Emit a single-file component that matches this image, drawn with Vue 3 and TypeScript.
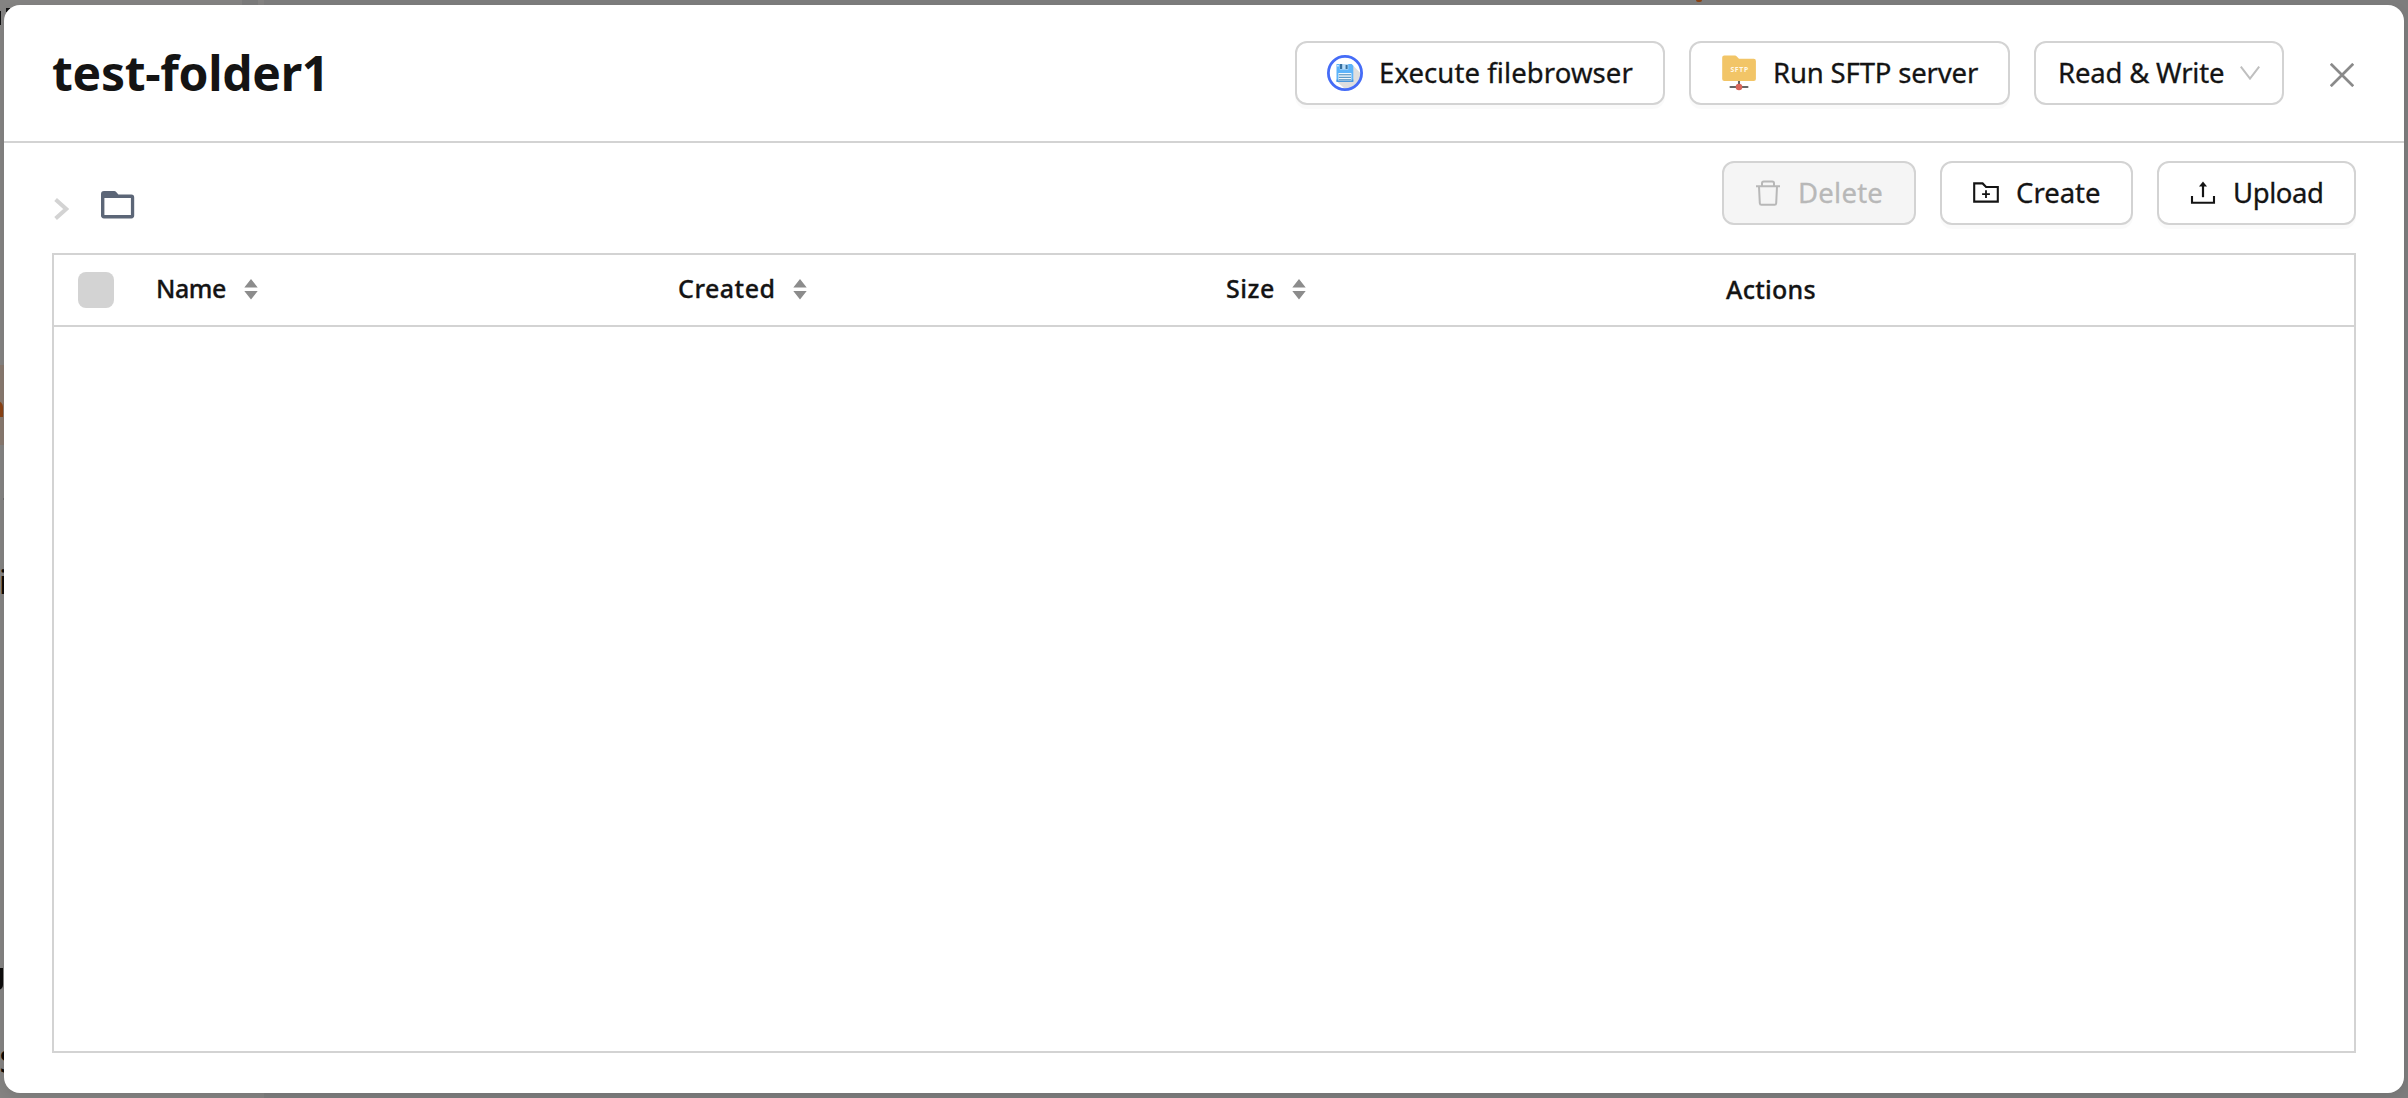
<script setup lang="ts">
interface Column {
  title: string
  key: string
  sortable: boolean
}

const columns: Column[] = [
  { title: 'Name', key: 'name', sortable: true },
  { title: 'Created', key: 'created', sortable: true },
  { title: 'Size', key: 'size', sortable: true },
  { title: 'Actions', key: 'actions', sortable: false },
]
</script>

<template>
  <div class="page">
    <div class="backdrop" aria-hidden="true">
      <div class="sidebar"></div>
      <div class="sidebar-handle"></div>
      <div class="active-item"></div>
      <span class="peek orange"></span>
      <span class="peek top-orange"></span>
      <span class="peek n-stem"></span>
      <span class="peek n-dot"></span>
      <span class="peek tick"></span>
      <span class="peek u-stem"></span>
      <span class="peek-text i-text">i</span>
      <span class="peek-text s-text">s</span>
    </div>

    <section class="modal">
      <header class="modal-header">
        <h1 class="title">test-folder1</h1>
        <div class="header-actions">
          <button class="btn execute">
            <svg width="36" height="36" viewBox="0 0 36 36">
              <circle cx="18" cy="18" r="16.7" fill="#fff" />
              <path d="M26 10.5L34 18.5A16 16 0 0 1 18 34L10.5 27Z" fill="#dedede" />
              <circle cx="18" cy="18" r="16.6" fill="none" stroke="#456cf7" stroke-width="2.8" />
              <path d="M9.5 9H24.7L26.3 10.7V26.5H9.5Z" fill="#5cb3fa" />
              <path d="M9.5 24.6H26.3V27H9.5Z" fill="#4a97dc" />
              <rect x="12.8" y="9" width="8.5" height="5.6" fill="#b9dcf8" />
              <rect x="13" y="9" width="2.2" height="5" fill="#356f9f" />
              <rect x="18.6" y="10" width="2" height="4" fill="#356f9f" />
              <rect x="10.3" y="10" width="1.3" height="1.5" fill="#fff" />
              <rect x="11.4" y="18" width="13" height="7.6" fill="#f1f8fc" />
              <path d="M11.8 19.8H24M11.8 22.3H24M11.8 24.8H24" stroke="#3d84b9" stroke-width="1" />
            </svg>
            <span class="label">Execute filebrowser</span>
          </button>
          <button class="btn sftp">
            <svg width="36" height="36" viewBox="0 0 36 36">
              <path d="M18 25V32M9.5 32H26.5" stroke="#666" stroke-width="2.1" stroke-linecap="round" />
              <path d="M3.3 .5H14Q15 .5 15.8 1.4L18 3.8H32.8Q34.9 3.8 34.9 5.9V23.9Q34.9 26 32.8 26H3.3Q1.2 26 1.2 23.9V2.6Q1.2 .5 3.3 .5Z" fill="#f2c567" />
              <circle cx="18" cy="32" r="3.3" fill="#d8655a" />
              <text x="9.4" y="17.2" textLength="17.6" font-family="Noto Sans, sans-serif" font-size="6.8" font-weight="700" fill="#fff8e8">SFTP</text>
            </svg>
            <span class="label">Run SFTP server</span>
          </button>
          <div class="select">
            <span class="label">Read &amp; Write</span>
            <svg width="20" height="14" viewBox="0 0 20 14">
              <path d="M.8 .6L10 12.6L19.2 .6" fill="none" stroke="#bfbfbf" stroke-width="2" />
            </svg>
          </div>
          <button class="close" aria-label="Close">
            <svg width="24" height="24" viewBox="0 0 24 24">
              <path d="M.8 .8L23.2 23.2M23.2 .8L.8 23.2" fill="none" stroke="#8a8a8a" stroke-width="2.7" />
            </svg>
          </button>
        </div>
      </header>

      <div class="toolbar">
        <nav class="breadcrumb">
          <svg class="crumb-arrow" width="15" height="22" viewBox="0 0 15 22">
            <path d="M1.6 1.5L12.2 11L1.6 20.5" fill="none" stroke="#d3d3d3" stroke-width="4" />
          </svg>
          <svg class="crumb-folder" width="34" height="28" viewBox="0 0 34 28">
            <path d="M3 0H13.2Q14.4 0 15.2 .9L17.4 3.4H30.4Q33.2 3.4 33.2 6.4V24.6Q33.2 27.4 30.4 27.4H3Q0 27.4 0 24.6V3Q0 0 3 0ZM3.4 7V24H29.9V7Z" fill="#5c6677" fill-rule="evenodd" />
          </svg>
        </nav>
        <div class="toolbar-actions">
          <button class="btn delete" disabled>
            <svg width="28" height="28" viewBox="0 0 28 28">
              <path d="M2 7.2H26M8 6.5V4.4Q8 2.6 9.8 2.6H18.2Q20 2.6 20 4.4V6.5M5 7.5L5.8 24.2Q5.9 25.8 7.5 25.8H20.5Q22.1 25.8 22.2 24.2L23 7.5" fill="none" stroke="#b8b8b8" stroke-width="2" />
            </svg>
            <span class="label">Delete</span>
          </button>
          <button class="btn create">
            <svg width="28" height="28" viewBox="0 0 28 28">
              <path d="M2.2 4.4H10.6L14.1 8H25.8V22.6H2.2Z" fill="none" stroke="#141414" stroke-width="2.1" />
              <path d="M14 11.2V19M10.1 15.1H17.9" stroke="#141414" stroke-width="1.8" />
            </svg>
            <span class="label">Create</span>
          </button>
          <button class="btn upload">
            <svg width="28" height="28" viewBox="0 0 28 28">
              <path d="M3 17V23.7H25V17" fill="none" stroke="#141414" stroke-width="2.1" />
              <path d="M14 5V18.2" stroke="#141414" stroke-width="2.2" />
              <path d="M14 2.4L18 7.6H10Z" fill="#141414" />
            </svg>
            <span class="label">Upload</span>
          </button>
        </div>
      </div>

      <div class="table">
        <div class="table-head">
          <div class="select-cell"><span class="checkbox"></span></div>
          <div v-for="col in columns" :key="col.key" class="cell" :class="col.key">
            <span class="label">{{ col.title }}</span>
            <svg v-if="col.sortable" class="sorter" width="14" height="21" viewBox="0 0 14 21">
              <path d="M7 0L13.7 8.5H.3ZM7 20.6L.3 12.1H13.7Z" fill="#8c8c8c" />
            </svg>
          </div>
        </div>
        <div class="table-body"></div>
      </div>
    </section>
  </div>
</template>

<style>
body {
  margin: 0;
  overflow: hidden;
}
</style>

<style scoped>
.page {
  position: relative;
  box-sizing: border-box;
  width: 2408px;
  height: 1098px;
  padding: 5px 4px;
  overflow: hidden;
  background: #7d7d7d;
  color: #141414;
  font-family: 'Noto Sans', 'Open Sans', sans-serif;
}
.backdrop > * {
  position: absolute;
}
.sidebar {
  left: 0;
  top: 0;
  width: 264px;
  height: 1098px;
  background: #848382;
}
.sidebar-handle {
  left: 242px;
  top: 0;
  width: 16px;
  height: 5px;
  background: #7b7b7b;
}
.active-item {
  left: 0;
  top: 365px;
  width: 20px;
  height: 80px;
  background: #88796f;
}
.orange {
  left: -5px;
  top: 401px;
  width: 8px;
  height: 16px;
  border-top-right-radius: 6px;
  background: #8a4214;
}
.top-orange {
  left: 1696px;
  top: 0;
  width: 6px;
  height: 2px;
  border-radius: 0 0 3px 3px;
  background: #8a4214;
}
.n-stem {
  left: 0;
  top: 11px;
  width: 1px;
  height: 14px;
  background: #101010;
}
.n-dot {
  left: 6px;
  top: 8px;
  width: 4px;
  height: 4px;
  background: #151515;
}
.tick {
  left: 3px;
  top: 498px;
  width: 1px;
  height: 2px;
  background: #6b6b6b;
}
.u-stem {
  left: -6px;
  top: 968px;
  width: 9px;
  height: 22px;
  border-bottom-right-radius: 5px;
  background: #0e0d0c;
}
.peek-text {
  color: #0b0a09;
  font-size: 32px;
  line-height: 32px;
}
.i-text {
  left: -1px;
  top: 566px;
}
.s-text {
  left: -1px;
  top: 1036px;
  font-size: 42px;
  line-height: 42px;
}

.modal {
  position: relative;
  box-sizing: border-box;
  display: flex;
  flex-direction: column;
  width: 2400px;
  height: 1088px;
  border-radius: 16px;
  background: #fff;
  box-shadow: 0 4px 12px rgba(0, 0, 0, 0.08);
}
.modal-header {
  box-sizing: border-box;
  flex: none;
  display: flex;
  justify-content: space-between;
  align-items: flex-start;
  height: 138px;
  padding: 36px 50px 0 48px;
  border-bottom: 2px solid #d3d3d3;
}
.title {
  margin: 0;
  height: 64px;
  font-size: 48px;
  font-weight: 700;
  line-height: 64px;
  letter-spacing: -0.3px;
}
.header-actions {
  display: flex;
  align-items: center;
}
.btn,
.select {
  box-sizing: border-box;
  display: flex;
  align-items: center;
  height: 64px;
  margin: 0;
  border: 2px solid #d3d3d3;
  border-radius: 12px;
  background: #fff;
  color: #141414;
  font-family: inherit;
  font-size: 27.5px;
  line-height: 40px;
  white-space: nowrap;
}
.btn {
  gap: 16px;
  padding: 0 0 0 30px;
  box-shadow: 0 4px 0 rgba(0, 0, 0, 0.02);
}
.btn svg,
.select svg,
.close svg {
  flex: none;
  display: block;
}
.label {
  -webkit-text-stroke: 0.3px currentColor;
}
.execute {
  width: 370px;
  margin-right: 24px;
  letter-spacing: 0.09px;
}
.sftp {
  width: 321px;
  margin-right: 24px;
  gap: 16px;
  letter-spacing: -0.16px;
}
.select {
  width: 250px;
  margin-right: 46px;
  padding-left: 22px;
  letter-spacing: -0.19px;
}
.select svg {
  margin-left: 16px;
}
.close {
  width: 24px;
  height: 24px;
  margin: 4px 0 0;
  padding: 0;
  border: 0;
  background: none;
}

.toolbar {
  flex: none;
  display: flex;
  justify-content: space-between;
  align-items: flex-start;
  height: 110px;
  padding: 18px 48px 0 50px;
  box-sizing: border-box;
}
.breadcrumb {
  display: flex;
  align-items: flex-start;
  padding-top: 30px;
}
.crumb-arrow {
  margin-top: 7px;
}
.crumb-folder {
  margin-left: 32px;
}
.toolbar-actions {
  display: flex;
  gap: 24px;
}
.delete {
  width: 194px;
  background: #f5f5f5;
  color: #b8b8b8;
  letter-spacing: 0.25px;
  box-shadow: none;
}
.create {
  width: 193px;
}
.upload {
  width: 199px;
  letter-spacing: -0.43px;
}

.table {
  box-sizing: border-box;
  flex: none;
  display: flex;
  flex-direction: column;
  width: 2304px;
  height: 800px;
  margin-left: 48px;
  border: 2px solid #d3d3d3;
}
.table-head {
  flex: none;
  display: flex;
  height: 70px;
  border-bottom: 2px solid #d3d3d3;
  font-size: 25px;
  font-weight: 500;
  line-height: 36px;
}
.table-body {
  flex: 1;
}
.select-cell {
  box-sizing: border-box;
  display: flex;
  align-items: center;
  width: 102px;
  padding-left: 24px;
}
.checkbox {
  width: 36px;
  height: 36px;
  border-radius: 8px;
  background: #d3d3d3;
}
.cell {
  display: flex;
  align-items: center;
}
.cell .label {
  padding-bottom: 4px;
}
.sorter {
  margin-top: -2px;
}
.name {
  width: 522px;
  letter-spacing: -0.46px;
}
.name .sorter {
  margin-left: 18px;
}
.created {
  width: 548px;
  letter-spacing: 0.5px;
}
.created .sorter {
  margin-left: 17px;
}
.size {
  width: 500px;
  letter-spacing: 0.52px;
}
.size .sorter {
  margin-left: 17px;
}
.actions {
  letter-spacing: 0.25px;
}
.actions .label {
  padding-bottom: 2px;
}
</style>
